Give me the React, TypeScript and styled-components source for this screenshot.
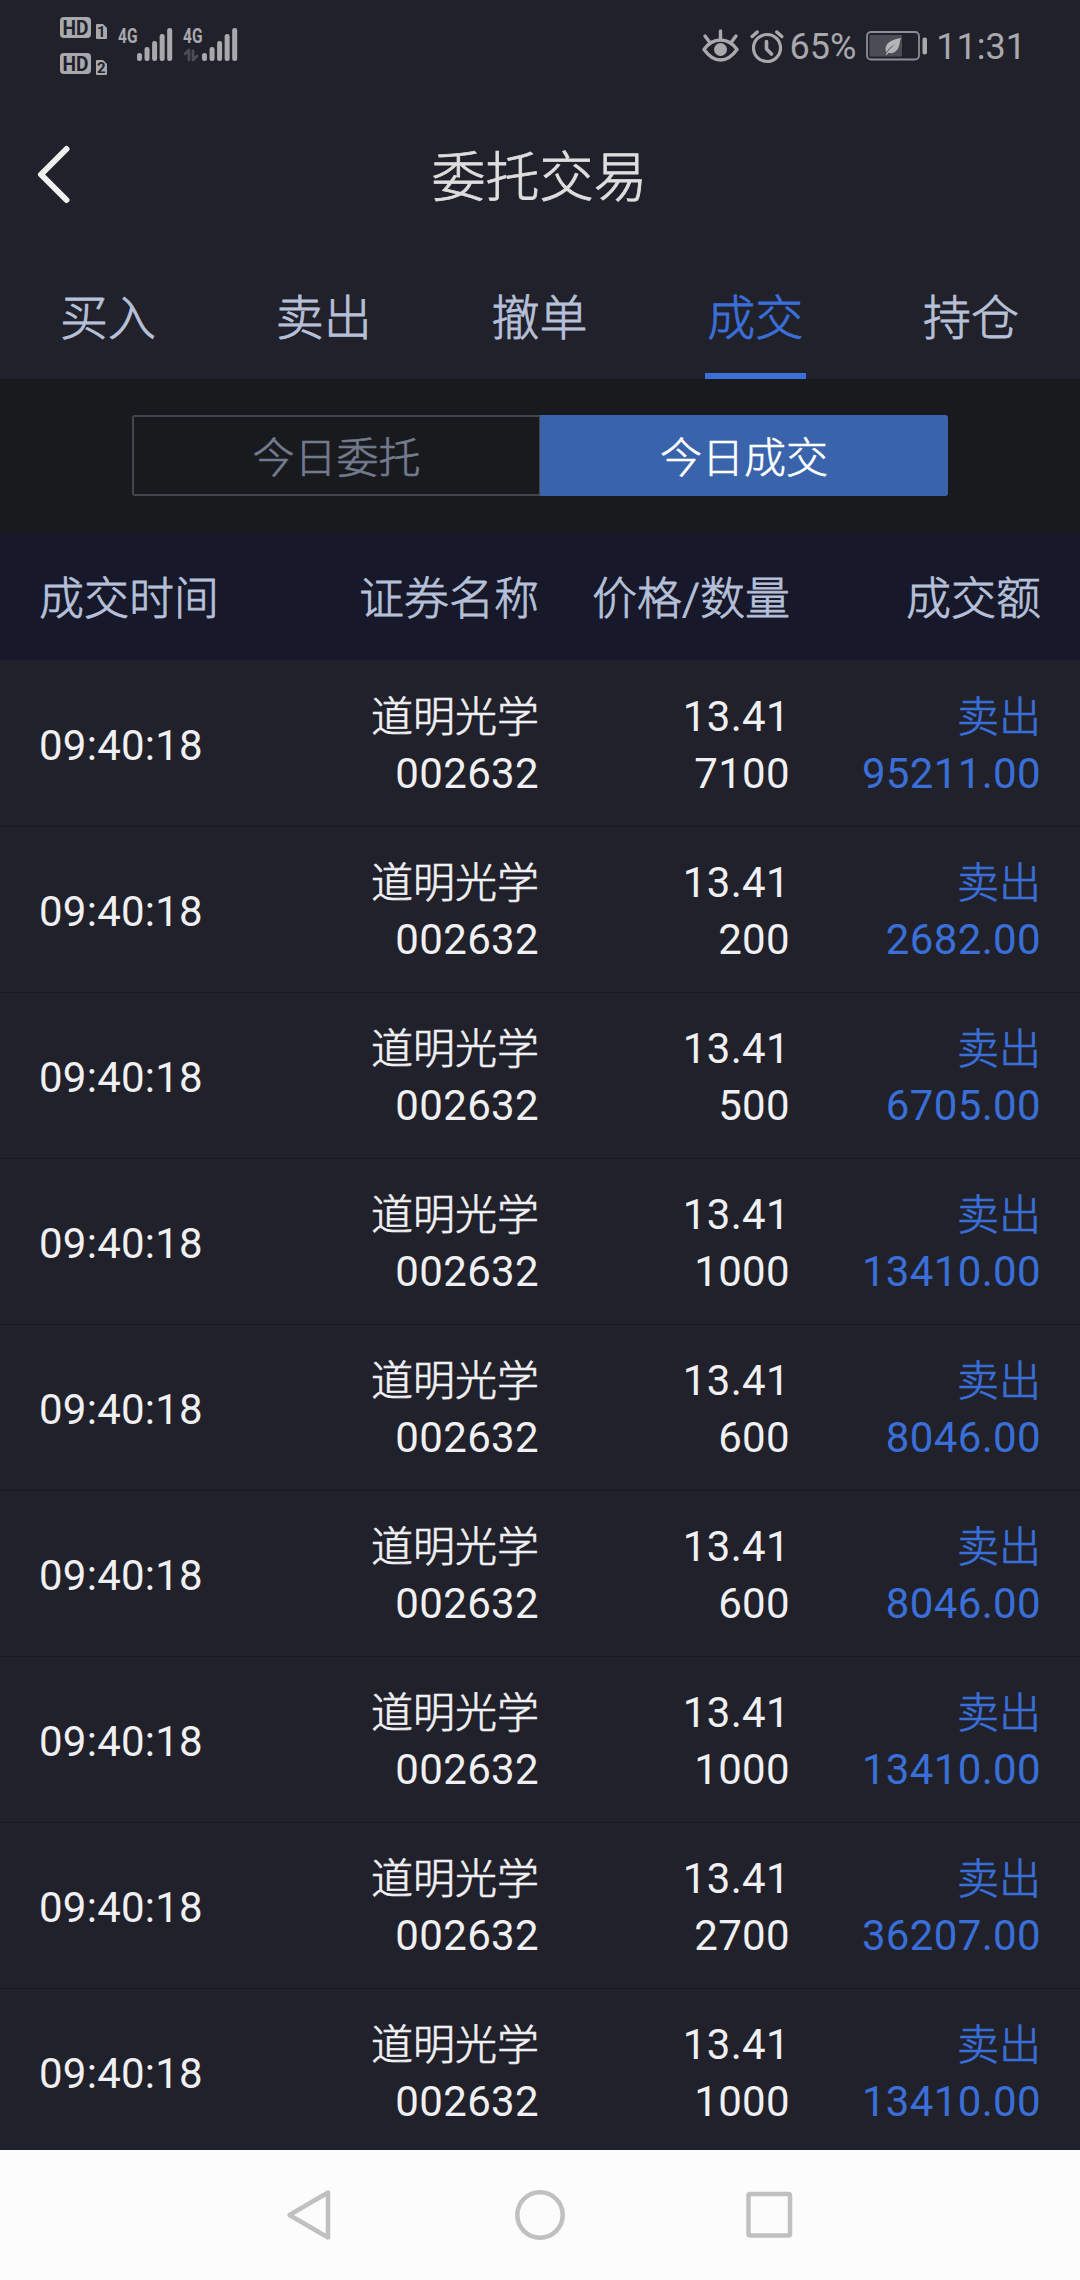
import React from "react";
import styled, { createGlobalStyle } from "styled-components";

const GlobalStyle = createGlobalStyle`
  * { box-sizing: border-box; }
  body {
    margin: 0;
    background: #21212b;
    font-family: Roboto, "Noto Sans CJK SC", sans-serif;
    font-weight: 400;
  }
  svg { display: block; }
`;

const Screen = styled.div`
  width: 1080px;
  height: 2280px;
  display: flex;
  flex-direction: column;
  overflow: hidden;
  background: #21212b;
`;

const StatusBar = styled.header`
  height: 90px;
  flex: none;
  display: flex;
  justify-content: space-between;
  align-items: flex-start;
  padding: 17px 54px 0 60px;
  color: #a9a9ad;
`;

const StatusLeft = styled.div`
  display: flex;
`;

const HdStack = styled.div`
  display: flex;
  flex-direction: column;
  gap: 14px;
  margin-right: 10px;
`;

const Network = styled.div`
  padding-top: 10px;
  width: 65px;
`;

const StatusRight = styled.div`
  display: flex;
  height: 58px;
  align-items: center;
`;

const StatusText = styled.span<{ $left: number }>`
  font-size: 36px;
  line-height: 58px;
  padding-top: 1px;
  margin-left: ${(p) => p.$left}px;
`;

const IconSlot = styled.span<{ $left?: number }>`
  margin-left: ${(p) => p.$left ?? 0}px;
`;

const TitleBar = styled.div`
  height: 168px;
  flex: none;
  display: grid;
  grid-template-columns: 200px 1fr 201px;
  align-items: center;
`;

const BackButton = styled.button`
  border: 0;
  background: none;
  padding: 0 0 0 36px;
  height: 168px;
`;

const Title = styled.h1`
  margin: 0;
  padding-top: 10px;
  text-align: center;
  font-size: 54px;
  line-height: 80px;
  font-weight: 300;
  -webkit-text-stroke: 0.8px currentColor;
  color: #dedede;
`;

const Tabs = styled.nav`
  height: 121px;
  flex: none;
  display: grid;
  grid-template-columns: repeat(5, 1fr);
  justify-items: center;
  padding-right: 1px;
`;

const Tab = styled.div<{ $active?: boolean }>`
  width: 101px;
  height: 121px;
  text-align: center;
  font-size: 48px;
  line-height: 121px;
  font-weight: 300;
  -webkit-text-stroke: 0.8px currentColor;
  color: ${(p) => (p.$active ? "#3a6fd8" : "#b6c0d8")};
  border-bottom: 6px solid ${(p) => (p.$active ? "#3a6fd8" : "transparent")};
`;

const SegmentArea = styled.div`
  height: 154px;
  flex: none;
  background: #191a1e;
  padding: 36px 132px 0;
`;

const Segments = styled.div`
  display: grid;
  grid-template-columns: 1fr 1fr;
  grid-template-rows: 81px;
  height: 81px;
  border-radius: 2px;
  overflow: hidden;
`;

const Segment = styled.div<{ $active?: boolean }>`
  height: 81px;
  border: 2px solid ${(p) => (p.$active ? "#3963ab" : "#44444d")};
  border-right-width: ${(p) => (p.$active ? 2 : 1)}px;
  border-radius: ${(p) => (p.$active ? "0 2px 2px 0" : "2px 0 0 2px")};
  background: ${(p) => (p.$active ? "#3963ab" : "transparent")};
  color: ${(p) => (p.$active ? "#ffffff" : "#737b8f")};
  text-align: center;
  font-size: 42px;
  line-height: 83px;
  font-weight: 300;
  -webkit-text-stroke: 0.6px currentColor;
`;

const Columns = styled.div`
  display: grid;
  grid-template-columns: 250px 250px 251px 251px;
  align-items: center;
  padding: 0 39px;
`;

const TableHead = styled(Columns)`
  height: 127px;
  flex: none;
  background: #17182a;
  color: #b6c0d8;
  font-size: 45px;
  font-weight: 300;
  -webkit-text-stroke: 0.8px currentColor;
`;

const HeadCell = styled.div<{ $start?: boolean }>`
  text-align: ${(p) => (p.$start ? "left" : "right")};
  white-space: nowrap;
  line-height: 66px;
  padding-top: 6px;
`;

const List = styled.main`
  flex: 1;
  min-height: 0;
  overflow: hidden;
  padding-top: 1px;
`;

const Row = styled(Columns)`
  height: 166px;
  border-bottom: 1px solid #1a1a22;
  color: #f0f0f2;
`;

const Time = styled.div`
  font-size: 42px;
  letter-spacing: 0.25px;
  line-height: 57px;
  padding-top: 3px;
`;

const Pair = styled.div<{ $accent?: boolean }>`
  display: flex;
  flex-direction: column;
  align-items: flex-end;
  font-size: 42px;
  line-height: 57px;
  padding-top: 2px;
  color: ${(p) => (p.$accent ? "#3a6fd8" : "inherit")};
`;

const Cjk = styled.span`
  font-weight: 300;
  -webkit-text-stroke: 0.7px currentColor;
  height: 57px;
  line-height: 59px;
`;

const Num = styled.span`
  letter-spacing: 0.35px;
  height: 57px;
`;

const NavBar = styled.footer`
  height: 130px;
  flex: none;
  display: flex;
  align-items: center;
  justify-content: space-between;
  padding: 0 286px 0 285px;
  background: #fcfcfc;
`;

const HdBadge = ({ sim }: { sim: string }) => (
  <svg width="48" height="22" viewBox="0 0 48 22" overflow="visible">
    <rect x="0" y="0" width="31" height="21" rx="4" fill="#a9a9ad" />
    <text x="2.5" y="18" fontSize="20.5" fontWeight="700" textLength="26" lengthAdjust="spacingAndGlyphs" fill="#21212b">HD</text>
    <path d="M37 7h6l4 4v10a1 1 0 0 1-1 1h-9a1 1 0 0 1-1-1V8a1 1 0 0 1 1-1z" fill="#a9a9ad" />
    <text x="41.3" y="20" fontSize="15" fontWeight="700" textAnchor="middle" fill="#21212b">{sim}</text>
  </svg>
);

const BARS = [26, 20, 14, 7, 1];

const Signal = ({ data }: { data?: boolean }) => (
  <svg width="56" height="36" viewBox="0 0 56 36" overflow="visible">
    <text x="0" y="16" fontSize="21" fontWeight="700" textLength="19.5" lengthAdjust="spacingAndGlyphs" fill="#a9a9ad">4G</text>
    {BARS.map((top, i) => (
      <rect key={top} x={19 + i * 7.55} y={top} width="5" height={34 - top} rx="2.3" fill="#a9a9ad" />
    ))}
    {data && (
      <g stroke="#4c4c56" strokeWidth="2.8" fill="none" strokeLinecap="round" strokeLinejoin="round">
        <path d="M2 27l4-4v10" />
        <path d="M10 24v9l4-4" />
      </g>
    )}
  </svg>
);

const EyeIcon = () => (
  <svg width="37" height="34" viewBox="0 0 37 34" fill="none" stroke="#a9a9ad" strokeWidth="3.4" strokeLinecap="round">
    <path d="M2 20.500C7 13.500 12.500 11 18.500 11S30 13.500 35 20.500C30 27.500 24.500 31 18.500 31S7 27.500 2 20.500z" strokeLinejoin="round" />
    <path d="M18.500 2v8M3 7l4.500 6M34 7l-4.500 6" />
    <circle cx="18.500" cy="20.500" r="6.500" fill="#a9a9ad" stroke="none" />
  </svg>
);

const AlarmIcon = () => (
  <svg width="34" height="35" viewBox="0 0 34 35" fill="none" stroke="#a9a9ad" strokeWidth="3.200" strokeLinecap="round" strokeLinejoin="round">
    <circle cx="17" cy="19" r="13.500" />
    <path d="M16.500 12.500v7.500l5 5" strokeWidth="3.600" />
    <path d="M2.200 7.500l5-4.500M31.800 7.500l-5-4.500" strokeWidth="3.400" />
  </svg>
);

const BatteryIcon = () => (
  <svg width="62" height="30" viewBox="0 0 62 30">
    <rect x="1" y="1" width="52" height="27.500" rx="4" fill="none" stroke="#8c8c93" strokeWidth="1.800" />
    <rect x="3.500" y="4" width="32.500" height="21.500" rx="1" fill="#4c4c55" />
    <path d="M35 7c-8 1.500-15 4-15.500 11 0 1.500.3 2.500.8 3.200 2.500-4.200 5.700-6.500 9.700-8.200-4 2.800-7.500 5.500-10.500 10.500l1.500.2 1.500-2c2 .8 5 .6 7.500-1.700C34 16.500 33 11.500 35 7z" fill="#b4b4b8" />
    <rect x="56.500" y="6.500" width="4.500" height="17" rx="2" fill="#a9a9ad" />
  </svg>
);

const trades: [string, string][] = [
  ["7100", "95211.00"],
  ["200", "2682.00"],
  ["500", "6705.00"],
  ["1000", "13410.00"],
  ["600", "8046.00"],
  ["600", "8046.00"],
  ["1000", "13410.00"],
  ["2700", "36207.00"],
  ["1000", "13410.00"],
];

const tabs = ["买入", "卖出", "撤单", "成交", "持仓"];

export default function App() {
  return (
    <Screen>
      <GlobalStyle />
      <StatusBar>
        <StatusLeft>
          <HdStack>
            <HdBadge sim="1" />
            <HdBadge sim="2" />
          </HdStack>
          <Network><Signal /></Network>
          <Network><Signal data /></Network>
        </StatusLeft>
        <StatusRight>
          <IconSlot><EyeIcon /></IconSlot>
          <IconSlot $left={11}><AlarmIcon /></IconSlot>
          <StatusText $left={6}>65%</StatusText>
          <IconSlot $left={10}><BatteryIcon /></IconSlot>
          <StatusText $left={8}>11:31</StatusText>
        </StatusRight>
      </StatusBar>

      <TitleBar>
        <BackButton aria-label="返回">
          <svg width="36" height="60" viewBox="0 0 36 60" fill="none" stroke="#f0f0ee" strokeWidth="6" strokeLinecap="round" strokeLinejoin="round">
            <path d="M30.500 5L5 30.500L30.500 56" />
          </svg>
        </BackButton>
        <Title>委托交易</Title>
      </TitleBar>

      <Tabs>
        {tabs.map((t) => (
          <Tab key={t} $active={t === "成交"}>{t}</Tab>
        ))}
      </Tabs>

      <SegmentArea>
        <Segments>
          <Segment>今日委托</Segment>
          <Segment $active>今日成交</Segment>
        </Segments>
      </SegmentArea>

      <TableHead>
        <HeadCell $start>成交时间</HeadCell>
        <HeadCell>证券名称</HeadCell>
        <HeadCell>价格/数量</HeadCell>
        <HeadCell>成交额</HeadCell>
      </TableHead>

      <List>
        {trades.map(([count, amount], i) => (
          <Row key={i}>
            <Time>09:40:18</Time>
            <Pair>
              <Cjk>道明光学</Cjk>
              <Num>002632</Num>
            </Pair>
            <Pair>
              <Num>13.41</Num>
              <Num>{count}</Num>
            </Pair>
            <Pair $accent>
              <Cjk>卖出</Cjk>
              <Num>{amount}</Num>
            </Pair>
          </Row>
        ))}
      </List>

      <NavBar>
        <svg width="48" height="52" viewBox="0 0 48 52" fill="none" stroke="#c0c0c0" strokeWidth="4.500" strokeLinejoin="round">
          <path d="M43 3.500v45L4.500 26z" />
        </svg>
        <svg width="52" height="52" viewBox="0 0 52 52" fill="none" stroke="#c0c0c0" strokeWidth="4.500">
          <circle cx="27" cy="26" r="22.700" />
        </svg>
        <svg width="50" height="52" viewBox="0 0 50 52" fill="none" stroke="#c0c0c0" strokeWidth="4.500">
          <rect x="4.500" y="5" width="41.500" height="41.500" rx="1.500" />
        </svg>
      </NavBar>
    </Screen>
  );
}
